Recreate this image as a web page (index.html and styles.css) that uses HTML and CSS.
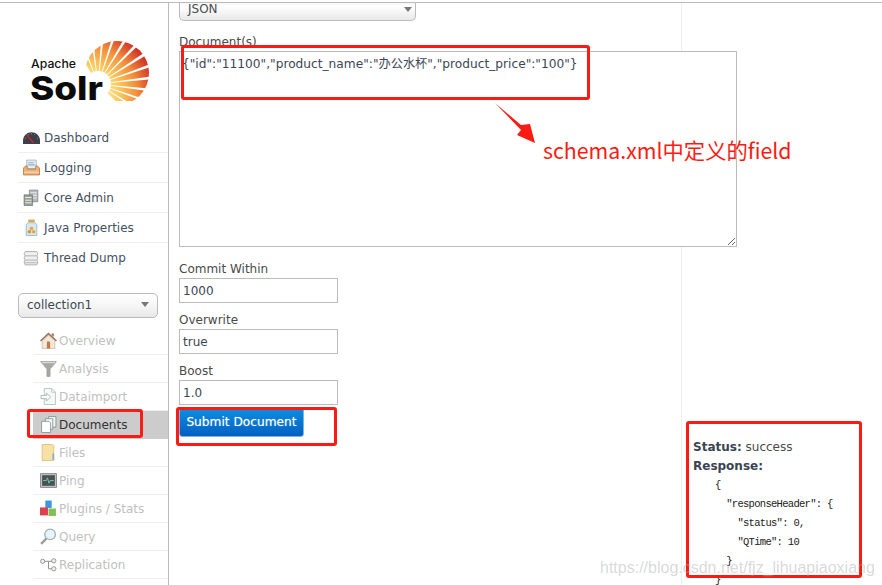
FILE: index.html
```html
<!DOCTYPE html>
<html lang="en">
<head>
<meta charset="utf-8">
<title>Solr Admin</title>
<link rel="stylesheet" href="styles.css">
</head>
<body>
<div class="app">
  <aside class="sidebar">
    <svg class="logo" viewBox="0 3 168 120" width="168" height="120">
      <defs>
        <radialGradient id="sun" gradientUnits="userSpaceOnUse" cx="88" cy="95" r="68">
          <stop offset="0.15" stop-color="#fff3b8"/>
          <stop offset="0.45" stop-color="#fbcb60"/>
          <stop offset="0.72" stop-color="#f28f3c"/>
          <stop offset="1" stop-color="#cf2f24"/>
        </radialGradient>
        <clipPath id="disc"><circle cx="117" cy="73" r="32"/></clipPath>
        <polygon id="ray" points="98,84 92.800,24 103.200,24"/>
        <mask id="rays" maskUnits="userSpaceOnUse" x="60" y="20" width="100" height="90">
          <g fill="#fff">
            <use href="#ray" transform="rotate(-27 98 84)"/>
            <use href="#ray" transform="rotate(-14 98 84)"/>
            <use href="#ray" transform="rotate(-1 98 84)"/>
            <use href="#ray" transform="rotate(12 98 84)"/>
            <use href="#ray" transform="rotate(25 98 84)"/>
            <use href="#ray" transform="rotate(38 98 84)"/>
            <use href="#ray" transform="rotate(51 98 84)"/>
            <use href="#ray" transform="rotate(64 98 84)"/>
            <use href="#ray" transform="rotate(77 98 84)"/>
            <use href="#ray" transform="rotate(90 98 84)"/>
            <use href="#ray" transform="rotate(103 98 84)"/>
            <use href="#ray" transform="rotate(116 98 84)"/>
            <use href="#ray" transform="rotate(129 98 84)"/>
          </g>
          <circle cx="98" cy="84" r="13" fill="#000"/>
        </mask>
      </defs>
      <g clip-path="url(#disc)">
        <rect x="84" y="40" width="66" height="61" fill="url(#sun)" mask="url(#rays)"/>
      </g>
      <text class="logo-apache" x="31" y="68" textLength="45" lengthAdjust="spacingAndGlyphs">Apache</text>
      <text class="logo-solr" x="30" y="100" textLength="73" lengthAdjust="spacingAndGlyphs">Solr</text>
    </svg>
    <ul class="nav">
      <li class="nav-item"><svg class="ico" viewBox="0 0 16 16"><path d="M0 14V11C0 6 4 3 8 3s8 3 8 8v3z" fill="#3e3f48"/><path d="M2 8.500l.8.5M5 5l.4.8M8 4v1M11 5l-.4.8M14 8.500l-.8.5" stroke="#aaa" stroke-width=".7"/><path d="M3 5l7 8" stroke="#e0242a" stroke-width="1.100"/></svg>Dashboard</li>
      <li class="nav-item"><svg class="ico" viewBox="0 0 16 16"><path d="M3.500 1h9v8h-9z" fill="#e4eef2" stroke="#9ab" stroke-width=".7"/><path d="M5 3.500h5M5 5.500h6" stroke="#8fb0be"/><path d="M0.500 8.500l2-2h1.500v3h8v-3h1.500l2 2v6.500h-15z" fill="#eeb27d" stroke="#b9793f" stroke-width=".8"/><path d="M1 12.500h14" stroke="#f8d9ba"/></svg>Logging</li>
      <li class="nav-item"><svg class="ico" viewBox="0 0 16 16"><path d="M6 1h8v11H6z" fill="#b4babd" stroke="#777" stroke-width=".6"/><path d="M7 3.500h6M7 6h6M7 8.500h6" stroke="#e6e8e8"/><path d="M1 5.500h8v10H1z" fill="#98a29a" stroke="#666" stroke-width=".6"/><path d="M2 8h6M2 10.500h6M2 13h6" stroke="#e6eae2"/></svg>Core Admin</li>
      <li class="nav-item"><svg class="ico" viewBox="0 0 16 16"><path d="M5 .500h6v2.500H5z" fill="#d9a94c"/><path d="M4.500 3.500h7l1.500 2v10H3V5.500z" fill="#d8e8f2" stroke="#9bb4c4" stroke-width=".8"/><circle cx="8" cy="9" r="1.700" fill="#e0a93a"/><circle cx="6" cy="12" r="1.700" fill="#d39a2c"/><circle cx="10" cy="12" r="1.700" fill="#e0a93a"/></svg>Java Properties</li>
      <li class="nav-item"><svg class="ico" viewBox="0 0 16 16"><path d="M2 1.500h11l1 2-1 2 1 2-1 2 1 2-1 2.500H2l-1-2.500 1-2-1-2 1-2-1-2z" fill="#f0f0f0" stroke="#a5a5a5" stroke-width=".8"/><path d="M2 5.500h11M2 9.500h11M2 12h11" stroke="#a5a5a5" stroke-width=".8"/></svg>Thread Dump</li>
    </ul>
    <div class="core-select"><span>collection1</span><i class="caret"></i></div>
    <ul class="subnav">
      <li class="sub-item"><svg class="ico" viewBox="0 0 16 16"><path d="M8 .500L0 8l1 1 7-6.500L15 9l1-1z" fill="#8a5a3a"/><path d="M2 8.500L8 3l6 5.500V15.500H2z" fill="#f3e4cf" stroke="#a88" stroke-width=".5"/><path d="M6.500 9h3v6.500h-3z" fill="#b3632b"/><path d="M11 1.500h2v3l-2-1.500z" fill="#8a5a3a"/></svg>Overview</li>
      <li class="sub-item"><svg class="ico" viewBox="0 0 16 16"><path d="M.500 1.500h15L9.500 8.500v7h-3v-7z" fill="#9a9a94" stroke="#777" stroke-width=".5"/><path d="M2 2.500h12" stroke="#ddd"/></svg>Analysis</li>
      <li class="sub-item"><svg class="ico" viewBox="0 0 16 16"><path d="M4 .500h7l3.500 3.500v11.500H4z" fill="#f4faf8" stroke="#a9bdb8" stroke-width=".9"/><path d="M11 .500V4h3.500" fill="none" stroke="#a9bdb8" stroke-width=".8"/><path d="M1 7h5V4.800L10 8.500 6 12.200V10H1z" fill="#fff" stroke="#94aca6" stroke-width=".9"/></svg>Dataimport</li>
      <li class="sub-item active"><svg class="ico" viewBox="0 0 16 16"><path d="M8 .500h7v10H8z" fill="#eef4f2" stroke="#7f9490" stroke-width=".8"/><path d="M5 2.500h7v10H5z" fill="#f5f9f8" stroke="#7f9490" stroke-width=".8"/><path d="M1.500 5h7l1.500 1.500v9H1.500z" fill="#fff" stroke="#7f9490" stroke-width=".8"/></svg>Documents</li>
      <li class="sub-item"><svg class="ico" viewBox="0 0 16 16"><path d="M2 .500h10l1 1V15.500H2z" fill="#f7dc95" stroke="#d6b263" stroke-width=".8"/><path d="M12.500 9v6" stroke="#6aa4c8" stroke-width="1.600"/></svg>Files</li>
      <li class="sub-item"><svg class="ico" viewBox="0 0 16 16"><path d="M.500 1.500h15v13H.500z" fill="#b8bcbc" stroke="#666" stroke-width=".8"/><path d="M2 3h12v10H2z" fill="#2c3434"/><path d="M3 8h3l1-2.500 1.500 5 1-2.500H13" fill="none" stroke="#58d0a0" stroke-width=".8"/></svg>Ping</li>
      <li class="sub-item"><svg class="ico" viewBox="0 0 16 16"><path d="M5 .500h6v7H5z" fill="#1b86d8"/><path d="M0 7h7.500v7.500H0z" fill="#d8202e"/><path d="M8 8h7v7H8z" fill="#6cb43a"/></svg>Plugins / Stats</li>
      <li class="sub-item"><svg class="ico" viewBox="0 0 16 16"><path d="M1 15l5-5" stroke="#8a8a8a" stroke-width="2.200"/><circle cx="9.500" cy="6" r="5" fill="#e6f0f6" stroke="#8ea4b0" stroke-width="1.200"/></svg>Query</li>
      <li class="sub-item"><svg class="ico" viewBox="0 0 16 16"><path d="M3 5h5v7h4M8 5h4" fill="none" stroke="#777" stroke-width=".9"/><circle cx="2.500" cy="5" r="2" fill="#eee" stroke="#777" stroke-width=".8"/><circle cx="13" cy="4.500" r="2" fill="#eee" stroke="#777" stroke-width=".8"/><circle cx="13" cy="12" r="2" fill="#eee" stroke="#777" stroke-width=".8"/></svg>Replication</li>
    </ul>
  </aside>
  <main class="main">
    <div class="type-select"><span>JSON</span><i class="caret"></i></div>
    <label class="field-label first">Document(s)</label>
    <textarea class="doc-area">{"id":"11100","product_name":"办公水杯","product_price":"100"}</textarea>
    <label class="field-label">Commit Within</label>
    <input class="field" value="1000">
    <label class="field-label">Overwrite</label>
    <input class="field" value="true">
    <label class="field-label">Boost</label>
    <input class="field" value="1.0">
    <button class="submit" type="button">Submit Document</button>
  </main>
  <section class="result">
    <div class="result-line"><b>Status:</b> success</div>
    <div class="result-line"><b>Response:</b></div>
<pre class="result-json">{
  "responseHeader": {
    "status": 0,
    "QTime": 10
  }
}</pre>
  </section>
</div>
<div class="mark mark-doc"></div>
<div class="mark mark-nav"></div>
<div class="mark mark-submit"></div>
<div class="mark mark-result"></div>
<svg class="arrow" viewBox="0 0 50 50" width="50" height="50"><polygon points="0,3 26,25 35,24 40,43 22,35 26,30"/></svg>
<div class="note">schema.xml中定义的field</div>
<div class="watermark">https://blog.csdn.net/fjz_lihuapiaoxiang</div>
</body>
</html>
```

FILE: styles.css
```css
* { box-sizing: border-box; }
html, body { margin: 0; height: 585px; overflow: hidden; background: #fff; }
body {
  position: relative;
  font-family: "DejaVu Sans", "Noto Sans CJK SC", sans-serif;
  font-size: 12px;
  color: #4a4a4a;
}
.app {
  display: flex;
  margin-top: 2px;
  height: 583px;
  border-top: 1px solid #bbb;
}
.sidebar {
  flex: 0 0 169px;
  border-right: 1px solid #bbb;
  overflow: hidden;
}
.logo { display: block; }
.logo-apache { font: 500 12px "Inter", sans-serif; fill: #111; }
.logo-solr { font: 800 33px "Inter", sans-serif; fill: #0b0b0b; }
.nav, .subnav { list-style: none; margin: 0; padding: 0; }
.nav { margin-left: 18px; }
.nav-item {
  display: flex;
  align-items: center;
  gap: 4px;
  height: 30px;
  padding-left: 5px;
  border-bottom: 1px solid #eee;
  color: #44505e;
}
.nav-item:last-child { border-bottom: 0; }
.ico { flex: none; width: 17px; height: 17px; }
.core-select {
  display: flex;
  align-items: center;
  justify-content: space-between;
  width: 140px;
  height: 25px;
  margin: 20px 0 0 18px;
  padding: 0 8px 2px;
  border: 1px solid #bbb;
  border-radius: 5px;
  background: linear-gradient(#fff, #f6f6f6 50%, #e8e8e8);
  color: #3c4654;
}
.caret {
  width: 0;
  height: 0;
  border-left: 4px solid transparent;
  border-right: 4px solid transparent;
  border-top: 5px solid #777;
}
.subnav { margin: 9px 0 0 33px; }
.sub-item {
  display: flex;
  align-items: center;
  gap: 2px;
  height: 28px;
  padding-left: 7px;
  border-bottom: 1px solid #eee;
  color: #c0c0c0;
}
.sub-item .ico { opacity: .85; }
.sub-item.active { background: #ccc; color: #333; border-bottom-color: #ccc; }
.sub-item.active .ico { opacity: 1; }
.main {
  flex: 0 0 513px;
  min-width: 0;
  padding-left: 10px;
  border-right: 1px solid #eee;
}
.type-select {
  display: flex;
  align-items: center;
  justify-content: space-between;
  width: 237px;
  height: 18px;
  padding: 0 3px 5px 8px;
  border: 1px solid #bbb;
  border-top: 0;
  border-radius: 0 0 5px 5px;
  background: linear-gradient(#f6f6f6, #fff 20%, #e8e8e8);
}
.field-label {
  display: block;
  height: 15px;
  margin: 15px 0 1px;
  line-height: 15px;
}
.field-label.first { margin-top: 14px; }
.field + .field-label { margin-top: 10px; }
.doc-area {
  position: relative;
  display: block;
  width: 558px;
  height: 196px;
  padding: 4px 2px;
  border: 1px solid #bbb;
  border-radius: 0;
  outline: 0;
  background: #fff;
  font: 12.200px/17px "DejaVu Sans", "Noto Sans CJK SC", sans-serif;
  color: #3c4654;
}
.field {
  display: block;
  width: 159px;
  height: 25px;
  padding: 0 3px;
  border: 1px solid #bbb;
  font: 12px "DejaVu Sans", sans-serif;
  color: #3c4654;
}
.submit {
  display: block;
  width: 125px;
  height: 30px;
  margin-top: 2px;
  padding: 0;
  border: 1px solid #7db4e6;
  border-radius: 3px;
  background: linear-gradient(#0d8fe3, #0060c2);
  color: #fff;
  font: 12.200px "DejaVu Sans", sans-serif;
  text-shadow: 0 0 1px rgba(255, 255, 255, .5);
}
.result { flex: 1; min-width: 0; padding: 435px 0 0 11px; overflow: hidden; }
.result-line { height: 19px; line-height: 19px; }
.result-line b { color: #3a4452; }
.result-json {
  margin: 0;
  padding-left: 22px;
  font: 10.500px/19px "Liberation Mono", monospace;
  letter-spacing: -.7px;
  color: #222;
}
.mark {
  position: absolute;
  border: 3px solid #fb1b12;
  border-radius: 3px;
}
.mark-doc { left: 181px; top: 45px; width: 409px; height: 55px; }
.mark-nav { left: 27px; top: 409px; width: 116px; height: 29px; }
.mark-submit { left: 176px; top: 407px; width: 161px; height: 39px; }
.mark-result { left: 686px; top: 421px; width: 176px; height: 157px; }
.arrow { position: absolute; left: 495px; top: 100px; }
.arrow polygon { fill: #fb1b12; }
.note {
  position: absolute;
  left: 543px;
  top: 135px;
  font: 21.300px/30px "Noto Sans CJK SC", sans-serif;
  color: #fb1b12;
  white-space: nowrap;
}
.watermark {
  position: absolute;
  left: 600px;
  top: 558px;
  font: 16px/20px "Liberation Sans", sans-serif;
  color: rgba(170, 170, 170, .45);
  white-space: nowrap;
}
```
